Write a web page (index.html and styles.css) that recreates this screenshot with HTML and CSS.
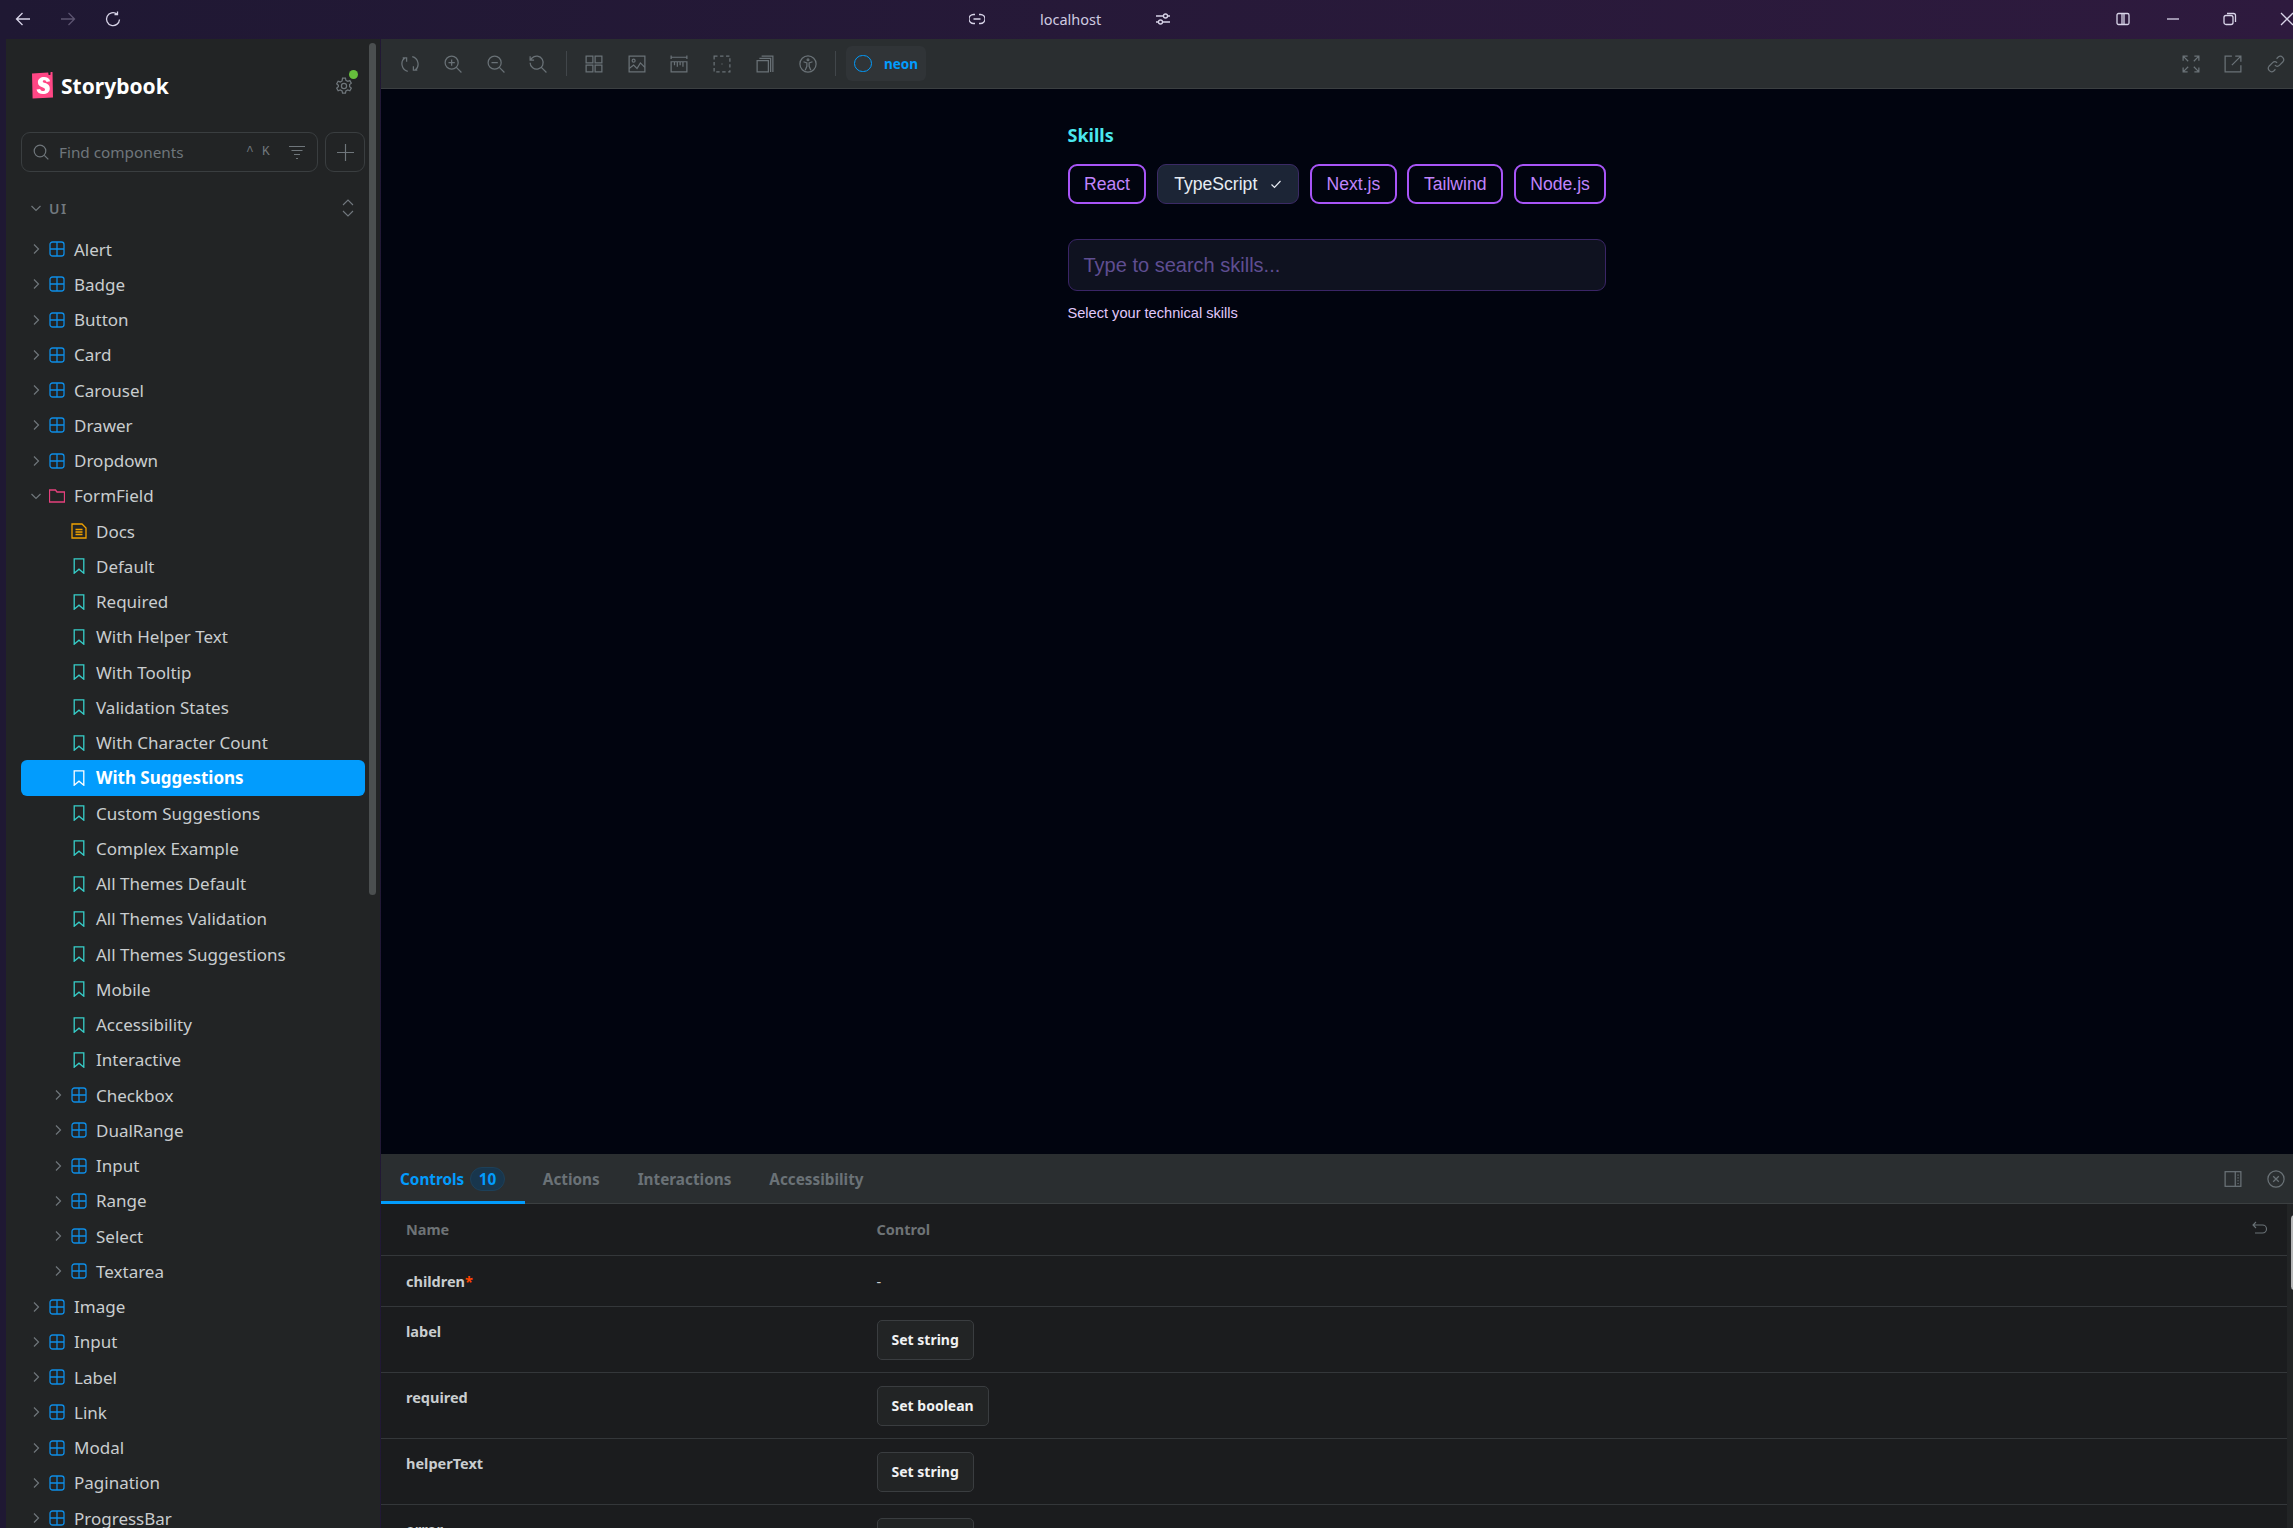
FILE: index.html
```html
<!DOCTYPE html>
<html lang="en">
<head>
  <meta charset="UTF-8" />
  <title>FormField / With Suggestions - Storybook</title>
  <link rel="stylesheet" href="styles.css">
</head>
<body>

  <!-- shared tree icons -->
  <svg class="sprite" width="0" height="0">
    <symbol id="i-comp" viewBox="0 0 16 16"><rect x="1" y="1" width="14" height="14" rx="2.5"/><path d="M8 1v14M1 8h14"/></symbol>
    <symbol id="i-story" viewBox="0 0 16 16"><path d="M3.2.8h9.6v14.4L8 11.2l-4.8 4z"/></symbol>
    <symbol id="i-right" viewBox="0 0 12 12"><path d="M4 1.5 8.5 6 4 10.5"/></symbol>
    <symbol id="i-down" viewBox="0 0 12 12"><path d="M1.5 4 6 8.500 10.500 4"/></symbol>
  </svg>

  <header class="titlebar">
    <div class="nav-btns">
      <svg class="tb-icon" viewBox="0 0 16 16"><path d="M15 8H1.500M7.500 2 1.500 8l6 6"/></svg>
      <svg class="tb-icon dim" viewBox="0 0 16 16"><path d="M1 8h13.500M8.500 2l6 6-6 6"/></svg>
      <svg class="tb-icon" viewBox="0 0 16 16"><path d="M14.500 8.500A6.500 6.500 0 1 1 12 3M12.500.5V3.500H9.500"/></svg>
    </div>
    <div class="address">
      <svg class="tb-icon" viewBox="0 0 16 16"><path d="M6 3.500H4.500a4.500 4.500 0 0 0 0 9H6M10 3.500h1.500a4.500 4.500 0 0 1 0 9H10M4.500 8h7"/></svg>
      <span class="host">localhost</span>
      <svg class="tb-icon" viewBox="0 0 16 16"><path d="M1 5h7.500M12.500 5H15M1 11h2.500M7.500 11H15"/><circle cx="10.500" cy="5" r="2"/><circle cx="5.500" cy="11" r="2"/></svg>
    </div>
    <div class="win-btns">
      <svg class="tb-icon split" viewBox="0 0 14 14"><rect x="1" y="1.500" width="12" height="11" rx="1.500"/><path d="M6 1.500v11M8 1.500v11"/></svg>
      <svg class="tb-icon min" viewBox="0 0 14 14"><path d="M1 7h12"/></svg>
      <svg class="tb-icon restore" viewBox="0 0 14 14"><rect x="1" y="3.500" width="9" height="9" rx="2"/><path d="M4 1.500h6.500a2 2 0 0 1 2 2V10"/></svg>
      <svg class="tb-icon close" viewBox="0 0 14 14"><path d="M1 1l12 12M13 1 1 13"/></svg>
    </div>
  </header>

  <div class="window">
    <aside class="sidebar">
      <div class="brand">
        <svg class="logo" viewBox="0 0 22 27"><path fill="#ff4785" d="M1 1.500 17 .5l.2 0 .4 2.600 1.800-.1.200-3L21.500 0 22 25.500 1.600 26.600z"/><path fill="#fff" transform="translate(11.900 13.700) scale(1.250) translate(-11.900 -13.700)" d="M11.800 10.300c0 .6.800.9 1.900 1.300 2 .7 3.700 1.700 3.700 4.300 0 2.900-2.300 4.500-5.400 4.500-2.700 0-4.700-1-5.200-3.600l2.900-.5c.3 1.200 1.100 1.600 2.200 1.600 1 0 1.700-.4 1.700-1.200 0-.8-.8-1.200-2.200-1.700-1.900-.7-3.500-1.600-3.500-4 0-2.600 2.100-4.200 5-4.200 2.300 0 4.200.9 4.800 3.300l-2.900.6c-.2-1-.9-1.400-1.800-1.400-.8 0-1.200.4-1.200 1z"/></svg>
        <span class="brand-name">Storybook</span>
        <span class="gear">
          <svg viewBox="0 0 16 16"><circle cx="8" cy="8" r="2.300"/><path d="M6.700 1h2.600l.4 2 1.600.9 1.900-.7 1.300 2.300-1.500 1.300v1.800l1.500 1.300-1.300 2.300-1.900-.7-1.600.9-.4 2H6.700l-.4-2-1.600-.9-1.900.7-1.300-2.300 1.500-1.300V7.300L1.500 6l1.300-2.300 1.900.7 1.600-.9z"/></svg>
          <i class="dot"></i>
        </span>
      </div>

      <div class="search-row">
        <div class="search">
          <svg class="s-icon" viewBox="0 0 16 16"><circle cx="7" cy="7" r="5.800"/><path d="m11.300 11.300 4 4"/></svg>
          <span class="s-text">Find components</span>
          <span class="s-key">^</span>
          <span class="s-key k">K</span>
          <svg class="s-icon filter" viewBox="0 0 16 16"><path d="M0 2.500h16M2.500 6.500h11M5 10.500h6M7 14.500h2"/></svg>
        </div>
        <div class="add"><svg viewBox="0 0 16 16"><path d="M8 0v16M0 8h16"/></svg></div>
      </div>

      <div class="group-head">
        <svg class="chev" viewBox="0 0 12 12"><path d="M1.500 4 6 8.500 10.500 4"/></svg>
        <span>UI</span>
        <svg class="unfold" viewBox="0 0 12 18"><path d="M1 6l5-5 5 5M1 12l5 5 5-5"/></svg>
      </div>

      <ul class="tree">
        <li class="row d1"><svg class="chev"><use href="#i-right"/></svg><svg class="ico comp"><use href="#i-comp"/></svg>Alert</li>
        <li class="row d1"><svg class="chev"><use href="#i-right"/></svg><svg class="ico comp"><use href="#i-comp"/></svg>Badge</li>
        <li class="row d1"><svg class="chev"><use href="#i-right"/></svg><svg class="ico comp"><use href="#i-comp"/></svg>Button</li>
        <li class="row d1"><svg class="chev"><use href="#i-right"/></svg><svg class="ico comp"><use href="#i-comp"/></svg>Card</li>
        <li class="row d1"><svg class="chev"><use href="#i-right"/></svg><svg class="ico comp"><use href="#i-comp"/></svg>Carousel</li>
        <li class="row d1"><svg class="chev"><use href="#i-right"/></svg><svg class="ico comp"><use href="#i-comp"/></svg>Drawer</li>
        <li class="row d1"><svg class="chev"><use href="#i-right"/></svg><svg class="ico comp"><use href="#i-comp"/></svg>Dropdown</li>
        <li class="row d1"><svg class="chev"><use href="#i-down"/></svg><svg class="ico folder" viewBox="0 0 16 16"><path d="M.5 2h6l1.500 2h7.500v10H.5z"/></svg>FormField</li>
        <li class="row d2"><svg class="chev none"></svg><svg class="ico doc" viewBox="0 0 16 16"><path d="M1 1h10l4 4v10H1zM4.500 6.500h7M4.500 9h7M4.500 11.500h7"/></svg>Docs</li>
        <li class="row d2"><svg class="chev none"></svg><svg class="ico story"><use href="#i-story"/></svg>Default</li>
        <li class="row d2"><svg class="chev none"></svg><svg class="ico story"><use href="#i-story"/></svg>Required</li>
        <li class="row d2"><svg class="chev none"></svg><svg class="ico story"><use href="#i-story"/></svg>With Helper Text</li>
        <li class="row d2"><svg class="chev none"></svg><svg class="ico story"><use href="#i-story"/></svg>With Tooltip</li>
        <li class="row d2"><svg class="chev none"></svg><svg class="ico story"><use href="#i-story"/></svg>Validation States</li>
        <li class="row d2"><svg class="chev none"></svg><svg class="ico story"><use href="#i-story"/></svg>With Character Count</li>
        <li class="row d2 selected"><svg class="chev none"></svg><svg class="ico story"><use href="#i-story"/></svg>With Suggestions</li>
        <li class="row d2"><svg class="chev none"></svg><svg class="ico story"><use href="#i-story"/></svg>Custom Suggestions</li>
        <li class="row d2"><svg class="chev none"></svg><svg class="ico story"><use href="#i-story"/></svg>Complex Example</li>
        <li class="row d2"><svg class="chev none"></svg><svg class="ico story"><use href="#i-story"/></svg>All Themes Default</li>
        <li class="row d2"><svg class="chev none"></svg><svg class="ico story"><use href="#i-story"/></svg>All Themes Validation</li>
        <li class="row d2"><svg class="chev none"></svg><svg class="ico story"><use href="#i-story"/></svg>All Themes Suggestions</li>
        <li class="row d2"><svg class="chev none"></svg><svg class="ico story"><use href="#i-story"/></svg>Mobile</li>
        <li class="row d2"><svg class="chev none"></svg><svg class="ico story"><use href="#i-story"/></svg>Accessibility</li>
        <li class="row d2"><svg class="chev none"></svg><svg class="ico story"><use href="#i-story"/></svg>Interactive</li>
        <li class="row d2"><svg class="chev"><use href="#i-right"/></svg><svg class="ico comp"><use href="#i-comp"/></svg>Checkbox</li>
        <li class="row d2"><svg class="chev"><use href="#i-right"/></svg><svg class="ico comp"><use href="#i-comp"/></svg>DualRange</li>
        <li class="row d2"><svg class="chev"><use href="#i-right"/></svg><svg class="ico comp"><use href="#i-comp"/></svg>Input</li>
        <li class="row d2"><svg class="chev"><use href="#i-right"/></svg><svg class="ico comp"><use href="#i-comp"/></svg>Range</li>
        <li class="row d2"><svg class="chev"><use href="#i-right"/></svg><svg class="ico comp"><use href="#i-comp"/></svg>Select</li>
        <li class="row d2"><svg class="chev"><use href="#i-right"/></svg><svg class="ico comp"><use href="#i-comp"/></svg>Textarea</li>
        <li class="row d1"><svg class="chev"><use href="#i-right"/></svg><svg class="ico comp"><use href="#i-comp"/></svg>Image</li>
        <li class="row d1"><svg class="chev"><use href="#i-right"/></svg><svg class="ico comp"><use href="#i-comp"/></svg>Input</li>
        <li class="row d1"><svg class="chev"><use href="#i-right"/></svg><svg class="ico comp"><use href="#i-comp"/></svg>Label</li>
        <li class="row d1"><svg class="chev"><use href="#i-right"/></svg><svg class="ico comp"><use href="#i-comp"/></svg>Link</li>
        <li class="row d1"><svg class="chev"><use href="#i-right"/></svg><svg class="ico comp"><use href="#i-comp"/></svg>Modal</li>
        <li class="row d1"><svg class="chev"><use href="#i-right"/></svg><svg class="ico comp"><use href="#i-comp"/></svg>Pagination</li>
        <li class="row d1"><svg class="chev"><use href="#i-right"/></svg><svg class="ico comp"><use href="#i-comp"/></svg>ProgressBar</li>
      </ul>
      <div class="side-scroll"></div>
    </aside>

    <main class="main">
      <div class="toolbar">
        <span class="tool"><svg viewBox="0 0 16 16"><path d="M3.500 2.500A6.800 6.800 0 0 0 6 14.500M1.500 2.500H5V6M12.500 13.500A6.800 6.800 0 0 0 10 1.500M14.500 13.500H11V10"/></svg></span>
        <span class="tool"><svg viewBox="0 0 16 16"><circle cx="6.800" cy="6.800" r="5.800"/><path d="m11 11 4.500 4.500M6.800 4v5.600M4 6.800h5.600"/></svg></span>
        <span class="tool"><svg viewBox="0 0 16 16"><circle cx="6.800" cy="6.800" r="5.800"/><path d="m11 11 4.500 4.500M4 6.800h5.600"/></svg></span>
        <span class="tool"><svg viewBox="0 0 16 16"><path d="M1 6.800a5.800 5.800 0 1 0 1.700-4.100L1 4.500M1 1v3.500h3.500M11 11l4.500 4.500"/></svg></span>
        <i class="divider"></i>
        <span class="tool"><svg viewBox="0 0 16 16"><rect x="1" y="1" width="6" height="6"/><rect x="9" y="1" width="6" height="6"/><rect x="1" y="9" width="6" height="6"/><rect x="9" y="9" width="6" height="6"/></svg></span>
        <span class="tool"><svg viewBox="0 0 16 16"><rect x="1" y="1" width="14" height="14"/><circle cx="5" cy="5" r="1.300"/><path d="m1 12 4-3 3 3 3-5 4 4"/></svg></span>
        <span class="tool"><svg viewBox="0 0 16 16"><path d="M1 .5v3M15 .5v3M1 2h14M1 6h14v9H1zM4 6v3M6.500 6v4.500M9 6v3M11.500 6v4.500"/></svg></span>
        <span class="tool"><svg viewBox="0 0 16 16"><rect x="1" y="1" width="14" height="14" stroke-dasharray="3 2.300"/><path d="M7.500 8h1"/></svg></span>
        <span class="tool"><svg viewBox="0 0 16 16"><rect x="1" y="5" width="10" height="10"/><path d="M3 3h10v12M5 1h10v14"/></svg></span>
        <span class="tool"><svg viewBox="0 0 16 16"><circle cx="8" cy="8" r="7.200"/><circle cx="8" cy="4.200" r=".8"/><path d="M4 6l3 1v3l-1.500 3.500M12 6 9 7v3l1.500 3.500"/></svg></span>
        <i class="divider"></i>
        <span class="theme"><i class="theme-dot"></i>neon</span>
        <span class="tool-spacer"></span>
        <span class="tool end"><svg viewBox="0 0 16 16"><path d="M1 1l4.500 4.500M15 1l-4.500 4.500M1 15l4.500-4.500M15 15l-4.500-4.500M1 5V1h4M11 1h4v4M1 11v4h4M11 15h4v-4"/></svg></span>
        <span class="tool end"><svg viewBox="0 0 16 16"><path d="M7 1H1v14h14V9M7 9l8-8M10 1h5v5"/></svg></span>
        <span class="tool end"><svg viewBox="0 0 16 16"><path d="M7 9a3 3 0 0 0 4.200 0l3-3a3 3 0 0 0-4.200-4.200L8.500 3.300M9 7a3 3 0 0 0-4.200 0l-3 3A3 3 0 0 0 6 14.200l1.500-1.500"/></svg></span>
      </div>

      <section class="canvas">
        <div class="field">
          <div class="field-label">Skills</div>
          <div class="chips">
            <span class="chip">React</span>
            <span class="chip on">TypeScript <svg viewBox="0 0 12 12"><path d="m1.500 6.500 3 3L10.500 3"/></svg></span>
            <span class="chip">Next.js</span>
            <span class="chip">Tailwind</span>
            <span class="chip">Node.js</span>
          </div>
          <div class="field-input">Type to search skills...</div>
          <div class="field-help">Select your technical skills</div>
        </div>
      </section>

      <section class="panel">
        <div class="tabs">
          <span class="tab active">Controls <b class="badge">10</b></span>
          <span class="tab">Actions</span>
          <span class="tab">Interactions</span>
          <span class="tab">Accessibility</span>
          <span class="tab-spacer"></span>
          <span class="tool end"><svg viewBox="0 0 16 16"><rect x="1" y="1.500" width="14" height="13"/><path d="M10 1.500v13M12.500 4v1M12.500 6.500v1M12.500 9v1M12.500 11.500v1"/></svg></span>
          <span class="tool end"><svg viewBox="0 0 16 16"><circle cx="8" cy="8" r="7.200"/><path d="m5.500 5.500 5 5M10.500 5.500l-5 5"/></svg></span>
        </div>
        <div class="table-wrap">
          <div class="table">
            <div class="t-row t-head"><span class="t-name">Name</span><span class="t-ctrl">Control</span>
              <svg class="undo" viewBox="0 0 16 16"><path d="M4 1 1 4l3 3M1 4h9.500a4 4 0 0 1 0 8H3"/></svg>
            </div>
            <div class="t-row t-short"><span class="t-name arg">children<em>*</em></span><span class="t-ctrl dash">-</span></div>
            <div class="t-row t-tall"><span class="t-name arg">label</span><span class="t-ctrl"><button class="set">Set string</button></span></div>
            <div class="t-row t-tall"><span class="t-name arg">required</span><span class="t-ctrl"><button class="set">Set boolean</button></span></div>
            <div class="t-row t-tall"><span class="t-name arg">helperText</span><span class="t-ctrl"><button class="set">Set string</button></span></div>
            <div class="t-row t-tall"><span class="t-name arg">error</span><span class="t-ctrl"><button class="set">Set string</button></span></div>
          </div>
          <div class="panel-scroll"><i class="panel-thumb"></i></div>
        </div>
      </section>
    </main>
  </div>

</body>
</html>
```

FILE: styles.css
```css
* {
  box-sizing: border-box;
}
html, body {
  margin: 0;
  height: 100%;
  overflow: hidden;
}
body {
  display: flex;
  flex-direction: column;
  font-family: "Noto Sans", "Open Sans", sans-serif;
  background: linear-gradient(90deg, #1f1833, #2e1a3e);
  color: #c9cdcf;
}
svg {
  fill: none;
  stroke: currentColor;
  display: block;
  flex: none;
}
.sprite {
  position: absolute;
}

/* browser title bar */
.titlebar {
  height: 39px;
  flex: none;
  display: flex;
  align-items: center;
  padding-bottom: 2px;
  color: #d8d4e8;
}
.tb-icon {
  width: 16px;
  height: 16px;
  stroke-width: 1.3;
}
.tb-icon.dim {
  color: #5c5470;
}
.nav-btns {
  display: flex;
  gap: 29px;
  padding-left: 15px;
  width: 969px;
}
.address {
  display: flex;
  align-items: center;
}
.host {
  font-size: 14.5px;
  margin: 0 54px 0 55px;
  color: #cfcbe0;
}
.win-btns {
  margin-left: auto;
  display: flex;
  align-items: center;
  gap: 43px;
  margin-right: -1px;
}
.win-btns .tb-icon {
  width: 14px;
  height: 14px;
}
.win-btns .split {
  margin-right: -7px;
}

/* window body */
.window {
  flex: 1;
  min-height: 0;
  display: flex;
  padding-left: 6px;
}

/* storybook sidebar */
.sidebar {
  position: relative;
  width: 374px;
  flex: none;
  margin-right: 1px;
  background: #222425;
  overflow: hidden;
}
.brand {
  display: flex;
  align-items: center;
  height: 93px;
  padding: 0 0 0 25px;
}
.logo {
  width: 22px;
  height: 27px;
  stroke: none;
}
.brand-name {
  font-weight: 700;
  font-size: 21px;
  color: #fff;
  margin-left: 8px;
}
.gear {
  position: relative;
  margin-left: auto;
  margin-right: 27px;
  color: #6f767b;
}
.gear svg {
  width: 18px;
  height: 18px;
  stroke-width: 1.1;
}
.dot {
  position: absolute;
  top: -7px;
  right: -5px;
  width: 9px;
  height: 9px;
  border-radius: 50%;
  background: #66bf3c;
}
.search-row {
  display: flex;
  gap: 7px;
  padding-left: 15px;
}
.search {
  width: 297px;
  height: 40px;
  border: 1px solid #3a3e40;
  border-radius: 9px;
  display: flex;
  align-items: center;
  padding: 0 11px 1px;
  color: #6f767b;
  font-size: 15.3px;
}
.s-icon {
  width: 16px;
  height: 16px;
  stroke-width: 1.2;
}
.s-text {
  margin-left: 10px;
  width: 187px;
}
.s-key {
  font-size: 13px;
  font-family: "Liberation Mono", monospace;
  width: 16px;
}
.s-key.k {
  width: 27px;
}
.add {
  width: 40px;
  height: 40px;
  border: 1px solid #3a3e40;
  border-radius: 9px;
  display: flex;
  align-items: center;
  justify-content: center;
  color: #6f767b;
}
.add svg {
  width: 17px;
  height: 17px;
  stroke-width: 1.1;
}
.group-head {
  display: flex;
  align-items: center;
  height: 30px;
  margin-top: 21px;
  padding-left: 24px;
  color: #72797f;
  font-size: 14px;
  font-weight: 600;
  letter-spacing: 1.6px;
}
.group-head .chev {
  margin-right: 7px;
}
.unfold {
  width: 12px;
  height: 18px;
  margin-left: auto;
  margin-right: 26px;
  stroke-width: 1.1;
}
.chev {
  width: 12px;
  height: 12px;
  color: #6f767b;
  stroke-width: 1.2;
}
.tree {
  list-style: none;
  margin: 8.5px 0 0;
  padding: 0;
}
.row {
  height: 35.26px;
  display: flex;
  align-items: center;
  gap: 7px;
  font-size: 17px;
  color: #c9cdcf;
  width: 344px;
  margin-left: 15px;
  border-radius: 6px;
  white-space: nowrap;
}
.row.d1 {
  padding-left: 9px;
}
.row.d2 {
  padding-left: 31px;
}
.ico {
  width: 16px;
  height: 16px;
  margin-right: 2px;
  stroke-width: 1.3;
}
.comp {
  color: #0e8de6;
}
.story {
  color: #37cfca;
}
.folder {
  color: #e5407c;
}
.doc {
  color: #f0a100;
}
.selected {
  background: #029cfd;
  color: #fff;
  font-weight: 700;
}
.selected .story {
  color: #fff;
}
.side-scroll {
  position: absolute;
  top: 4px;
  right: 4px;
  width: 7px;
  height: 852px;
  border-radius: 4px;
  background: #4b4f50;
}

/* right hand side */
.main {
  flex: 1;
  min-width: 0;
  display: flex;
  flex-direction: column;
}
.toolbar {
  height: 50px;
  flex: none;
  display: flex;
  align-items: center;
  padding: 0 0 0 8px;
  background: #2a2e30;
  border-bottom: 1px solid #3b3f41;
  color: #6a7277;
}
.tool {
  width: 42.7px;
  display: flex;
  justify-content: center;
}
.tool svg {
  width: 18px;
  height: 18px;
  stroke-width: 1.1;
}
.divider {
  width: 1px;
  height: 25px;
  margin: 0 6px;
  background: #41464a;
}
.theme {
  width: 80.5px;
  height: 35px;
  margin-left: 4px;
  border-radius: 6px;
  background: #303437;
  color: #029cfd;
  font-size: 13.5px;
  font-weight: 700;
  display: flex;
  align-items: center;
  padding-left: 8.5px;
  gap: 12px;
}
.theme-dot {
  width: 17.5px;
  height: 17.5px;
  border: 1.2px solid #029cfd;
  border-radius: 50%;
}
.tool-spacer, .tab-spacer {
  flex: 1;
}
.tool.end {
  width: 42.5px;
}
.toolbar .tool.end:last-child {
  margin-right: -4px;
}
.tabs .tool.end:last-child {
  margin-right: -4px;
}

/* story canvas */
.canvas {
  flex: 1;
  min-height: 0;
  background: #01040f;
  padding: 31px 0 0 686.5px;
}
.field {
  width: 538px;
}
.field-label {
  font-size: 18px;
  font-weight: 700;
  line-height: 30px;
  color: #4be7ee;
}
.chips {
  display: flex;
  gap: 10.7px;
  margin-top: 14px;
}
.chip {
  height: 40px;
  padding: 0 14.5px;
  border: 2px solid #a855f7;
  border-radius: 9px;
  display: flex;
  align-items: center;
  font-family: "Liberation Sans", Arial, sans-serif;
  font-size: 17.6px;
  color: #c084fc;
}
.chip.on {
  background: #1c2536;
  border: 1px solid #3b2a66;
  color: #e7ecf3;
  padding: 0 16px;
  gap: 13px;
}
.chip svg {
  width: 12px;
  height: 12px;
  stroke-width: 1.2;
}
.field-input {
  height: 52px;
  margin-top: 35px;
  padding: 0 15px;
  border: 1px solid #3a2566;
  border-radius: 9px;
  background: #0f1220;
  display: flex;
  align-items: center;
  font-family: "Liberation Sans", Arial, sans-serif;
  font-size: 20px;
  color: #5f4e92;
}
.field-help {
  margin-top: 12px;
  font-family: "Liberation Sans", Arial, sans-serif;
  font-size: 14.6px;
  line-height: 20px;
  color: #e0c8fb;
}

/* addon panel */
.panel {
  height: 374px;
  flex: none;
  display: flex;
  flex-direction: column;
  background: #1b1c1e;
  overflow: hidden;
}
.tabs {
  height: 50px;
  flex: none;
  display: flex;
  align-items: center;
  background: #2a2e30;
  border-bottom: 1px solid #3b3f41;
  color: #6a7277;
  padding-left: 19px;
}
.tab {
  font-size: 15.3px;
  font-weight: 700;
  margin-right: 38px;
  display: flex;
  align-items: center;
  height: 100%;
  position: relative;
}
.tab.active {
  color: #029cfd;
}
.tab.active::after {
  content: "";
  position: absolute;
  left: -19px;
  right: -20px;
  bottom: -1px;
  height: 3px;
  background: #029cfd;
}
.badge {
  width: 34.5px;
  height: 24px;
  margin-left: 6px;
  border-radius: 12px;
  background: #18364d;
  border: 1px solid #1d4059;
  display: flex;
  align-items: center;
  justify-content: center;
  font-weight: 700;
}
.table-wrap {
  flex: 1;
  display: flex;
  min-height: 0;
}
.table {
  flex: 1;
  min-width: 0;
}
.t-row {
  display: flex;
  border-bottom: 1px solid #34373a;
  position: relative;
  font-size: 14.5px;
  font-weight: 700;
}
.t-head {
  height: 52px;
  padding-bottom: 2px;
  align-items: center;
  color: #6e7376;
}
.t-short {
  height: 51px;
  padding-bottom: 1px;
  align-items: center;
}
.t-tall {
  height: 66px;
  padding-top: 13px;
}
.t-name {
  width: 495.5px;
  padding-left: 25px;
  flex: none;
}
.arg {
  color: #c9cdcf;
}
.t-tall .arg {
  padding-top: 1px;
}
.arg em {
  color: #ff4400;
  font-style: normal;
}
.dash {
  font-weight: 400;
}
.undo {
  position: absolute;
  right: 19px;
  top: 17px;
  width: 16px;
  height: 16px;
  color: #6a7277;
  stroke-width: 1.1;
}
.set {
  height: 40px;
  padding: 0 14px 2px;
  border: 1px solid #3a3d40;
  border-radius: 5px;
  background: #222425;
  color: #f0f1f2;
  font-family: inherit;
  font-size: 14px;
  font-weight: 700;
}
.panel-scroll {
  width: 6px;
  flex: none;
  background: #222425;
  position: relative;
}
.panel-thumb {
  position: absolute;
  top: 11px;
  left: 4px;
  width: 7px;
  height: 75px;
  border-radius: 4px;
  background: #b5b6b7;
}
```
